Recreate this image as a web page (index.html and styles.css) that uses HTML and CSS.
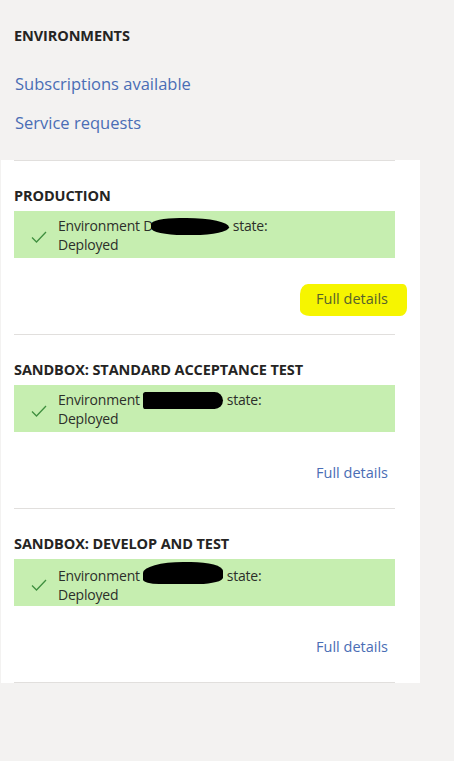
FILE: index.html
```html
<!DOCTYPE html>
<html>
<head>
<meta charset="utf-8">
<link rel="stylesheet" href="styles.css">
</head>
<body>
<div class="top">
  <div class="heading">ENVIRONMENTS</div>
  <a class="nav-link first" href="#">Subscriptions available</a>
  <a class="nav-link" href="#">Service requests</a>
</div>
<div class="panel">
  <section class="env">
    <div class="env-title">PRODUCTION</div>
    <div class="status">
      <svg class="check" width="16" height="12" viewBox="0 0 16 12"><path d="M1 6.5 L5.5 11 L15 1" fill="none" stroke="#3f8f3f" stroke-width="1.3"/></svg>
      <div class="status-text">Environment D<span class="redact r1"></span> state:<br>Deployed</div>
    </div>
    <div class="details-row"><a class="details highlight" href="#">Full details</a></div>
  </section>
  <section class="env">
    <div class="env-title">SANDBOX: STANDARD ACCEPTANCE TEST</div>
    <div class="status">
      <svg class="check" width="16" height="12" viewBox="0 0 16 12"><path d="M1 6.5 L5.5 11 L15 1" fill="none" stroke="#3f8f3f" stroke-width="1.3"/></svg>
      <div class="status-text">Environment <span class="redact r2"></span> state:<br>Deployed</div>
    </div>
    <div class="details-row"><a class="details" href="#">Full details</a></div>
  </section>
  <section class="env last">
    <div class="env-title">SANDBOX: DEVELOP AND TEST</div>
    <div class="status">
      <svg class="check" width="16" height="12" viewBox="0 0 16 12"><path d="M1 6.5 L5.5 11 L15 1" fill="none" stroke="#3f8f3f" stroke-width="1.3"/></svg>
      <div class="status-text">Environment <span class="redact r3"></span> state:<br>Deployed</div>
    </div>
    <div class="details-row"><a class="details" href="#">Full details</a></div>
  </section>
</div>
</body>
</html>
```
FILE: styles.css
```css
* { box-sizing: border-box; }
body {
  margin: 0;
  background: #f3f2f1;
  font-family: "Open Sans", "Noto Sans", sans-serif;
  color: #252423;
  width: 454px;
  height: 761px;
}
.top {
  padding: 26px 14px 0 14px;
  height: 160px;
  display: flex;
  flex-direction: column;
  align-items: flex-start;
}
.heading {
  font-size: 14.5px;
  font-weight: 700;
  line-height: 20px;
  letter-spacing: -0.1px;
}
.nav-link {
  font-size: 16.5px;
  line-height: 24px;
  color: #4a6db5;
  text-decoration: none;
  letter-spacing: 0;
  margin-top: 15px;
  margin-left: 1px;
}
.nav-link.first { margin-top: 26px; }
.panel {
  width: 419px;
  margin-left: 1px;
  background: #fff;
  padding: 0 25px 0 13px;
}
.env {
  border-top: 1px solid #e1dfdd;
  padding: 25px 0 25px 0;
}
.env.last { border-bottom: 1px solid #e1dfdd; }
.env-title {
  font-size: 14.5px;
  font-weight: 700;
  line-height: 20px;
  letter-spacing: -0.1px;
}
.status {
  margin-top: 5px;
  height: 47px;
  background: #c6eeb0;
  display: flex;
  align-items: center;
  padding-left: 17px;
}
.check { flex: none; margin-top: 4px; }
.status-text {
  margin-left: 11px;
  font-size: 14px;
  line-height: 19px;
  letter-spacing: -0.2px;
  color: #2c2f2a;
}
.redact {
  display: inline-block;
  background: #000;
  height: 17px;
  vertical-align: -4px;
  border-radius: 40% 60% 50% 45%;
}
.r1 { width: 78px; margin-left: -2px; }
.r2 { width: 80px; border-radius: 3px 10px 10px 3px; }
.r3 { width: 80px; height: 22px; vertical-align: -3px; border-radius: 50% 40% 30% 20%; }
.details-row {
  margin-top: 31px;
  display: flex;
  justify-content: flex-end;
  padding-right: 7px;
}
.details {
  font-size: 14.5px;
  line-height: 20px;
  color: #4a6db5;
  text-decoration: none;
  letter-spacing: 0;
}
.details.highlight {
  color: #56622c;
  background: #f6f500;
  padding: 5px 19px 7px 16px;
  margin: -5px -19px -7px 0;
  border-radius: 8px 4px 7px 10px / 10px 6px 8px 6px;
}
```
